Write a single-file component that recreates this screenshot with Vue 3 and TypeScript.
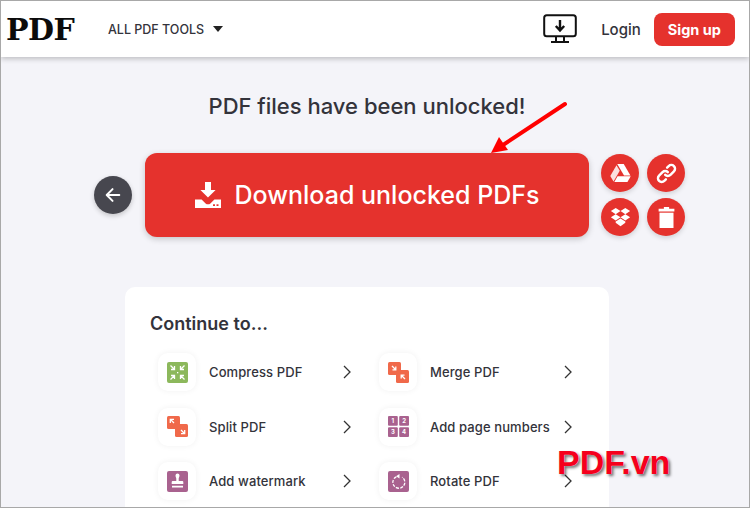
<script setup lang="ts">
// Tiles under "Continue to...", in reading order
interface Tool {
  name: string;
  kind: "compress" | "merge" | "split" | "numbers" | "watermark" | "rotate";
}

const tools: Tool[] = [
  { name: "Compress PDF", kind: "compress" },
  { name: "Merge PDF", kind: "merge" },
  { name: "Split PDF", kind: "split" },
  { name: "Add page numbers", kind: "numbers" },
  { name: "Add watermark", kind: "watermark" },
  { name: "Rotate PDF", kind: "rotate" },
];
</script>

<template>
  <div class="page">
    <header class="topbar">
      <div class="logo">PDF</div>
      <nav class="tools-menu">
        <span>ALL PDF TOOLS</span>
        <span class="caret"></span>
      </nav>
      <div class="topbar-right">
        <svg class="desktop" viewBox="0 0 34 30" fill="none" stroke="#111" stroke-width="2">
          <rect x="1.2" y="1.2" width="31.6" height="21" rx="2.5" />
          <path d="M13 22.5v5M21 22.5v5M8 28h18" />
          <path d="M17 6v10M12.8 12l4.2 4.4 4.2-4.4" stroke-width="2.4" />
        </svg>
        <a class="login">Login</a>
        <a class="signup">Sign up</a>
      </div>
    </header>

    <main class="content">
      <h1 class="headline">PDF files have been unlocked!</h1>

      <div class="actions">
        <button class="back">
          <svg viewBox="0 0 20 20" fill="none" stroke="#fff" stroke-width="2.2" stroke-linecap="round" stroke-linejoin="round">
            <path d="M17 10H3.5M9.5 3.5 3 10l6.5 6.5" />
          </svg>
        </button>

        <button class="download">
          <svg class="download-icon" viewBox="0 0 26 26" fill="#fff">
            <path d="M10 0h6v8h4.6L13 15.6 5.4 8H10z" />
            <path d="M0 17.5h6.6l4 3.9c1.4 1.2 3.4 1.2 4.800 0l4-3.900H26V26H0z" />
            <rect x="18" y="22.300" width="2" height="1.700" fill="#e5322d" />
            <rect x="21.500" y="22.300" width="2" height="1.700" fill="#e5322d" />
          </svg>
          <span>Download unlocked PDFs</span>
        </button>

        <div class="side-actions">
          <button class="round">
            <svg viewBox="0 0 22 20" fill="#fff">
              <path d="M7.600 0h6.800l7 12h-6.700z" />
              <path d="M6.800 1.300 10.200 7 3.700 18.500.3 12.700z" opacity="0.85" />
              <path d="M7.900 13h13.800l-3.400 6H4.500z" />
            </svg>
          </button>
          <button class="round">
            <svg viewBox="0 0 24 24" fill="none" stroke="#fff" stroke-width="2.800" stroke-linecap="round">
              <path d="M10.500 13.500a4.200 4.200 0 0 0 6 0l4-4a4.200 4.200 0 0 0-6-6l-1.800 1.800" />
              <path d="M13.500 10.500a4.200 4.200 0 0 0-6 0l-4 4a4.200 4.200 0 0 0 6 6l1.800-1.800" />
            </svg>
          </button>
          <button class="round">
            <svg viewBox="0 0 24 22" fill="#fff">
              <path d="M6.500 0 12 3.600 6.500 7.200 1 3.600zM17.500 0 23 3.600l-5.500 3.600L12 3.600zM6.500 7.200 12 10.800l-5.500 3.600L1 10.800zM17.500 7.200l5.500 3.600-5.500 3.600-5.500-3.600z" />
              <path d="M6.500 15.700 12 12.200l5.500 3.500V17L12 21l-5.500-4z" />
            </svg>
          </button>
          <button class="round">
            <svg viewBox="0 0 20 24" fill="#fff">
              <path d="M7 0h6v2h6v3H1V2h6z" />
              <path d="M2 6.500h16V24H2z" />
            </svg>
          </button>
        </div>
      </div>

      <section class="continue-card">
        <h2 class="continue-title">Continue to...</h2>
        <div class="tool-grid">
          <a v-for="tool in tools" :key="tool.name" class="tool">
            <span class="tile">
              <svg v-if="tool.kind === 'compress'" viewBox="0 0 21 21">
                <rect width="21" height="21" rx="2" fill="#8cb85c" />
                <path d="M3.500 3.500l3.500 3.500M7.500 4v3.500H4M17.500 3.500 14 7M13.500 4v3.500H17M3.500 17.500 7 14M7.500 17v-3.500H4M17.500 17.500 14 14M13.500 17v-3.500H17" fill="none" stroke="#fff" stroke-width="1.300" />
                <rect x="10" y="10" width="1.300" height="1.300" fill="#fff" />
              </svg>
              <svg v-else-if="tool.kind === 'merge'" viewBox="0 0 21 21">
                <rect width="13" height="13" rx="1.500" fill="#f0694a" />
                <rect x="8" y="8" width="13" height="13" rx="1.500" fill="#f0694a" />
                <path d="M4 4l3.500 3.500M7.800 4.500v3.300H4.500M17 17l-3.500-3.500M13.200 16.500v-3.300h3.300" fill="none" stroke="#fff" stroke-width="1.300" />
              </svg>
              <svg v-else-if="tool.kind === 'split'" viewBox="0 0 21 21">
                <rect width="13" height="13" rx="1.500" fill="#f0694a" />
                <rect x="8" y="8" width="13" height="13" rx="1.500" fill="#f0694a" />
                <path d="M7 7 3.500 3.500M3.300 7V3.300H7M14 14l3.500 3.500M17.700 14v3.700H14" fill="none" stroke="#fff" stroke-width="1.300" />
              </svg>
              <svg v-else-if="tool.kind === 'numbers'" viewBox="0 0 21 21">
                <rect width="9.800" height="9.800" rx="1" fill="#a9628f" />
                <rect x="11.200" width="9.800" height="9.800" rx="1" fill="#a9628f" />
                <rect y="11.200" width="9.800" height="9.800" rx="1" fill="#a9628f" />
                <rect x="11.200" y="11.200" width="9.800" height="9.800" rx="1" fill="#a9628f" />
                <g fill="#fff" font-size="6" font-weight="700" font-family="Inter, sans-serif" text-anchor="middle">
                  <text x="4.900" y="7.100">1</text>
                  <text x="16.100" y="7.100">2</text>
                  <text x="4.900" y="18.300">3</text>
                  <text x="16.100" y="18.300">4</text>
                </g>
              </svg>
              <svg v-else-if="tool.kind === 'watermark'" viewBox="0 0 21 21">
                <rect width="21" height="21" rx="2" fill="#a9628f" />
                <path d="M8.500 4.500a2 2 0 0 1 4 0c0 1.500-.8 2-.8 3.300v2.200h3.600a1 1 0 0 1 1 1V13H4.700v-2a1 1 0 0 1 1-1h3.600V7.800c0-1.300-.8-1.800-.8-3.300zM5 14.700h11V16.500H5z" fill="#fff" />
              </svg>
              <svg v-else viewBox="0 0 21 21">
                <rect width="21" height="21" rx="2" fill="#a9628f" />
                <path d="M8.300 5.800a6 6 0 1 0 5.800.4" fill="none" stroke="#fff" stroke-width="1.300" stroke-dasharray="3 1.300" />
                <path d="M11.500 3v4.500L8 5.200z" fill="#fff" />
              </svg>
            </span>
            <span class="tool-name">{{ tool.name }}</span>
            <svg class="chevron" viewBox="0 0 8 14" fill="none" stroke="#333" stroke-width="1.300">
              <path d="M1 1l6 6-6 6" />
            </svg>
          </a>
        </div>
      </section>
    </main>

    <!-- annotation pasted over the screenshot -->
    <svg class="annotation" viewBox="0 0 80 56">
      <path d="M75 5 10 48" stroke="#f00" stroke-width="4" stroke-linecap="round" fill="none" />
      <path d="M1 54 9 38l9 13z" fill="#f00" />
    </svg>
    <div class="stamp">PDF.vn</div>
  </div>
</template>

<style>
html,
body {
  margin: 0;
  overflow: hidden;
}
</style>

<style scoped>
.page {
  position: relative;
  box-sizing: border-box;
  width: 750px;
  height: 508px;
  overflow: hidden;
  border: 1px solid #a8a8a8;
  background: #f4f4f9;
  font-family: Inter, "Liberation Sans", sans-serif;
  color: #33333b;
}

.topbar {
  position: relative;
  z-index: 1;
  display: flex;
  align-items: center;
  height: 56px;
  padding-right: 14px;
  background: #fff;
  box-shadow: 0 2px 5px rgba(0, 0, 0, 0.22);
}

.logo {
  width: 107px;
  padding-left: 5px;
  box-sizing: border-box;
  font-family: "DejaVu Serif", serif;
  font-size: 30px;
  font-weight: 700;
  letter-spacing: -0.5px;
  color: #0b0b0b;
}

.tools-menu {
  display: flex;
  align-items: center;
  gap: 9px;
  font-size: 12.5px;
  font-weight: 500;
  color: #33333b;
}

.caret {
  width: 0;
  height: 0;
  border-left: 5px solid transparent;
  border-right: 5px solid transparent;
  border-top: 6px solid #222;
}

.topbar-right {
  display: flex;
  align-items: center;
  margin-left: auto;
}

.desktop {
  width: 34px;
  height: 30px;
  margin-right: 24px;
}

.login {
  margin-right: 13px;
  font-size: 15px;
  font-weight: 500;
}

.signup {
  display: flex;
  align-items: center;
  height: 33px;
  padding: 0 14px;
  border-radius: 8px;
  background: #e5322d;
  color: #fff;
  font-size: 14.5px;
  font-weight: 700;
}

.content {
  display: flex;
  flex-direction: column;
}

.headline {
  margin: 35px 0 0;
  font-size: 22px;
  line-height: 28px;
  font-weight: 500;
  text-align: center;
  transform: translateX(-8px);
}

.actions {
  display: flex;
  align-items: center;
  gap: 12px;
  margin-top: 33px;
  padding-left: 93px;
}

button {
  border: 0;
  padding: 0;
  font-family: inherit;
  color: #fff;
}

.back {
  display: flex;
  align-items: center;
  justify-content: center;
  width: 38px;
  height: 38px;
  margin-right: 1px;
  border-radius: 50%;
  background: #47474f;
  box-shadow: 0 2px 5px rgba(0, 0, 0, 0.2);
}

.back svg {
  width: 18px;
  height: 18px;
}

.download {
  display: flex;
  align-items: center;
  justify-content: center;
  gap: 14px;
  width: 444px;
  height: 84px;
  border-radius: 12px;
  background: #e5322d;
  box-shadow: 0 2px 6px rgba(0, 0, 0, 0.2);
  font-size: 25px;
  font-weight: 500;
}

.download-icon {
  width: 26px;
  height: 26px;
}

.side-actions {
  display: grid;
  grid-template-columns: 38px 38px;
  gap: 6px 8px;
}

.round {
  display: flex;
  align-items: center;
  justify-content: center;
  width: 38px;
  height: 38px;
  border-radius: 50%;
  background: #e5322d;
  box-shadow: 0 2px 5px rgba(0, 0, 0, 0.15);
}

.round svg {
  width: 21px;
  height: 21px;
}

.continue-card {
  width: 484px;
  height: 260px;
  margin: 50px 0 0 124px;
  box-sizing: border-box;
  padding: 26px 0 0 25px;
  border-radius: 10px;
  background: #fff;
}

.continue-title {
  margin: 0 0 18px;
  font-size: 18px;
  line-height: 22px;
  font-weight: 600;
}

.tool-grid {
  display: grid;
  grid-template-columns: 221px 221px;
  grid-auto-rows: 54.5px;
  padding-left: 8px;
}

.tool {
  display: flex;
  align-items: center;
  height: 38px;
}

.tile {
  display: flex;
  align-items: center;
  justify-content: center;
  width: 38px;
  height: 38px;
  border-radius: 10px;
  box-shadow: 0 0 6px rgba(0, 0, 0, 0.06);
}

.tile svg {
  width: 21px;
  height: 21px;
}

.tool-name {
  margin-left: 13px;
  font-size: 13px;
  font-weight: 500;
  letter-spacing: 0.1px;
}

.chevron {
  position: absolute;
  margin-left: 185px;
  width: 8px;
  height: 14px;
}

.annotation {
  position: absolute;
  left: 489px;
  top: 98px;
  width: 80px;
  height: 56px;
}

.stamp {
  position: absolute;
  left: 556px;
  top: 441px;
  font-family: "Liberation Sans", sans-serif;
  font-size: 34px;
  line-height: 40px;
  font-weight: 700;
  color: #f5001c;
  text-shadow: 0 0 1px #fff, 2px 2px 3px rgba(0, 0, 0, 0.55);
}
</style>
